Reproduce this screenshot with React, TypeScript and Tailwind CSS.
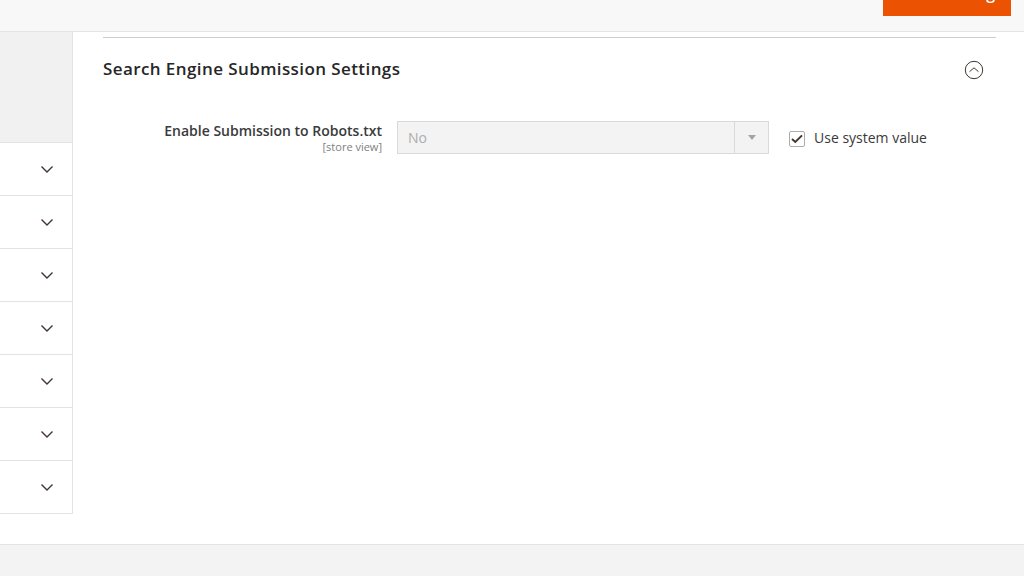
const rows = [0, 1, 2, 3, 4, 5, 6]

function Chevron() {
  return (
    <svg width="14" height="9" viewBox="0 0 14 9" fill="none">
      <path d="M1.5 1.5 7 7l5.5-5.5" stroke="#41362f" strokeWidth="1.4" />
    </svg>
  )
}

export default function App() {
  return (
    <div className="flex h-[576px] w-[1024px] flex-col overflow-hidden bg-white font-['Open_Sans',sans-serif] text-[#303030]">
      <header className="flex h-[32px] shrink-0 justify-end border-b border-[#e3e3e3] bg-[#f8f8f8] pr-[13px]">
        <button className="flex h-[16px] w-[128px] items-end justify-end overflow-hidden bg-[#eb5202] pr-[16px]">
          <span className="mb-[12px] whitespace-nowrap text-[16px] leading-[22px] font-semibold text-white">Save Config</span>
        </button>
      </header>

      <div className="flex h-[512px] shrink-0">
        <aside className="h-[482px] w-[73px] shrink-0 border-r border-[#e3e3e3]">
          <div className="h-[110px] bg-[#f1f1f1]" />
          {rows.map((row) => (
            <div key={row} className="flex h-[53px] items-center justify-end border-t border-[#e3e3e3] pr-[18px]">
              <Chevron />
            </div>
          ))}
          <div className="border-t border-[#e3e3e3]" />
        </aside>

        <main className="flex-1 pt-[5px] pr-[28px] pl-[30px]">
          <div className="border-t border-[#cccccc]" />
          <div className="flex h-[62px] items-center justify-between pr-[12px]">
            <h2 className="text-[17px] leading-[24px] font-semibold tracking-[0.41px] text-[#262626]">
              Search Engine Submission Settings
            </h2>
            <svg width="20" height="20" viewBox="0 0 20 20" fill="none" className="mt-[1px]">
              <circle cx="10" cy="10" r="8.7" stroke="#41362f" />
              <path d="M5.5 11.7 10 7.8l4.5 3.9" stroke="#41362f" />
            </svg>
          </div>

          <div className="mt-[21px] flex items-start">
            <div className="w-[279px] text-right">
              <div className="text-[14px] leading-[19px] font-semibold text-[#3a3a3a]">Enable Submission to Robots.txt</div>
              <div className="text-[11px] leading-[14px] text-[#808080]">[store view]</div>
            </div>
            <div className="ml-[15px] flex h-[33px] w-[372px] items-stretch border border-[#d9d9d9] bg-[#f3f3f3]">
              <div className="flex-1 pl-[10px] text-[14px] leading-[32px] text-[#adadad]">No</div>
              <div className="flex w-[34px] items-center justify-center border-l border-[#d9d9d9]">
                <div className="h-0 w-0 border-x-[4px] border-t-[5px] border-x-transparent border-t-[#a3a3a3]" />
              </div>
            </div>
            <label className="ml-[20px] flex h-[33px] items-center gap-[9px]">
              <span className="mt-[2px] flex h-[16px] w-[16px] items-center justify-center rounded-[2px] border border-[#adadad] bg-white">
                <svg width="12" height="10" viewBox="0 0 12 10" fill="none">
                  <path d="M1 5 4.3 8 11 1.4" stroke="#41362f" strokeWidth="1.9" />
                </svg>
              </span>
              <span className="text-[14px] leading-[19px] text-[#3a3a3a]">Use system value</span>
            </label>
          </div>
        </main>
      </div>

      <footer className="flex-1 border-t border-[#e3e3e3] bg-[#f3f3f3]" />
    </div>
  )
}
